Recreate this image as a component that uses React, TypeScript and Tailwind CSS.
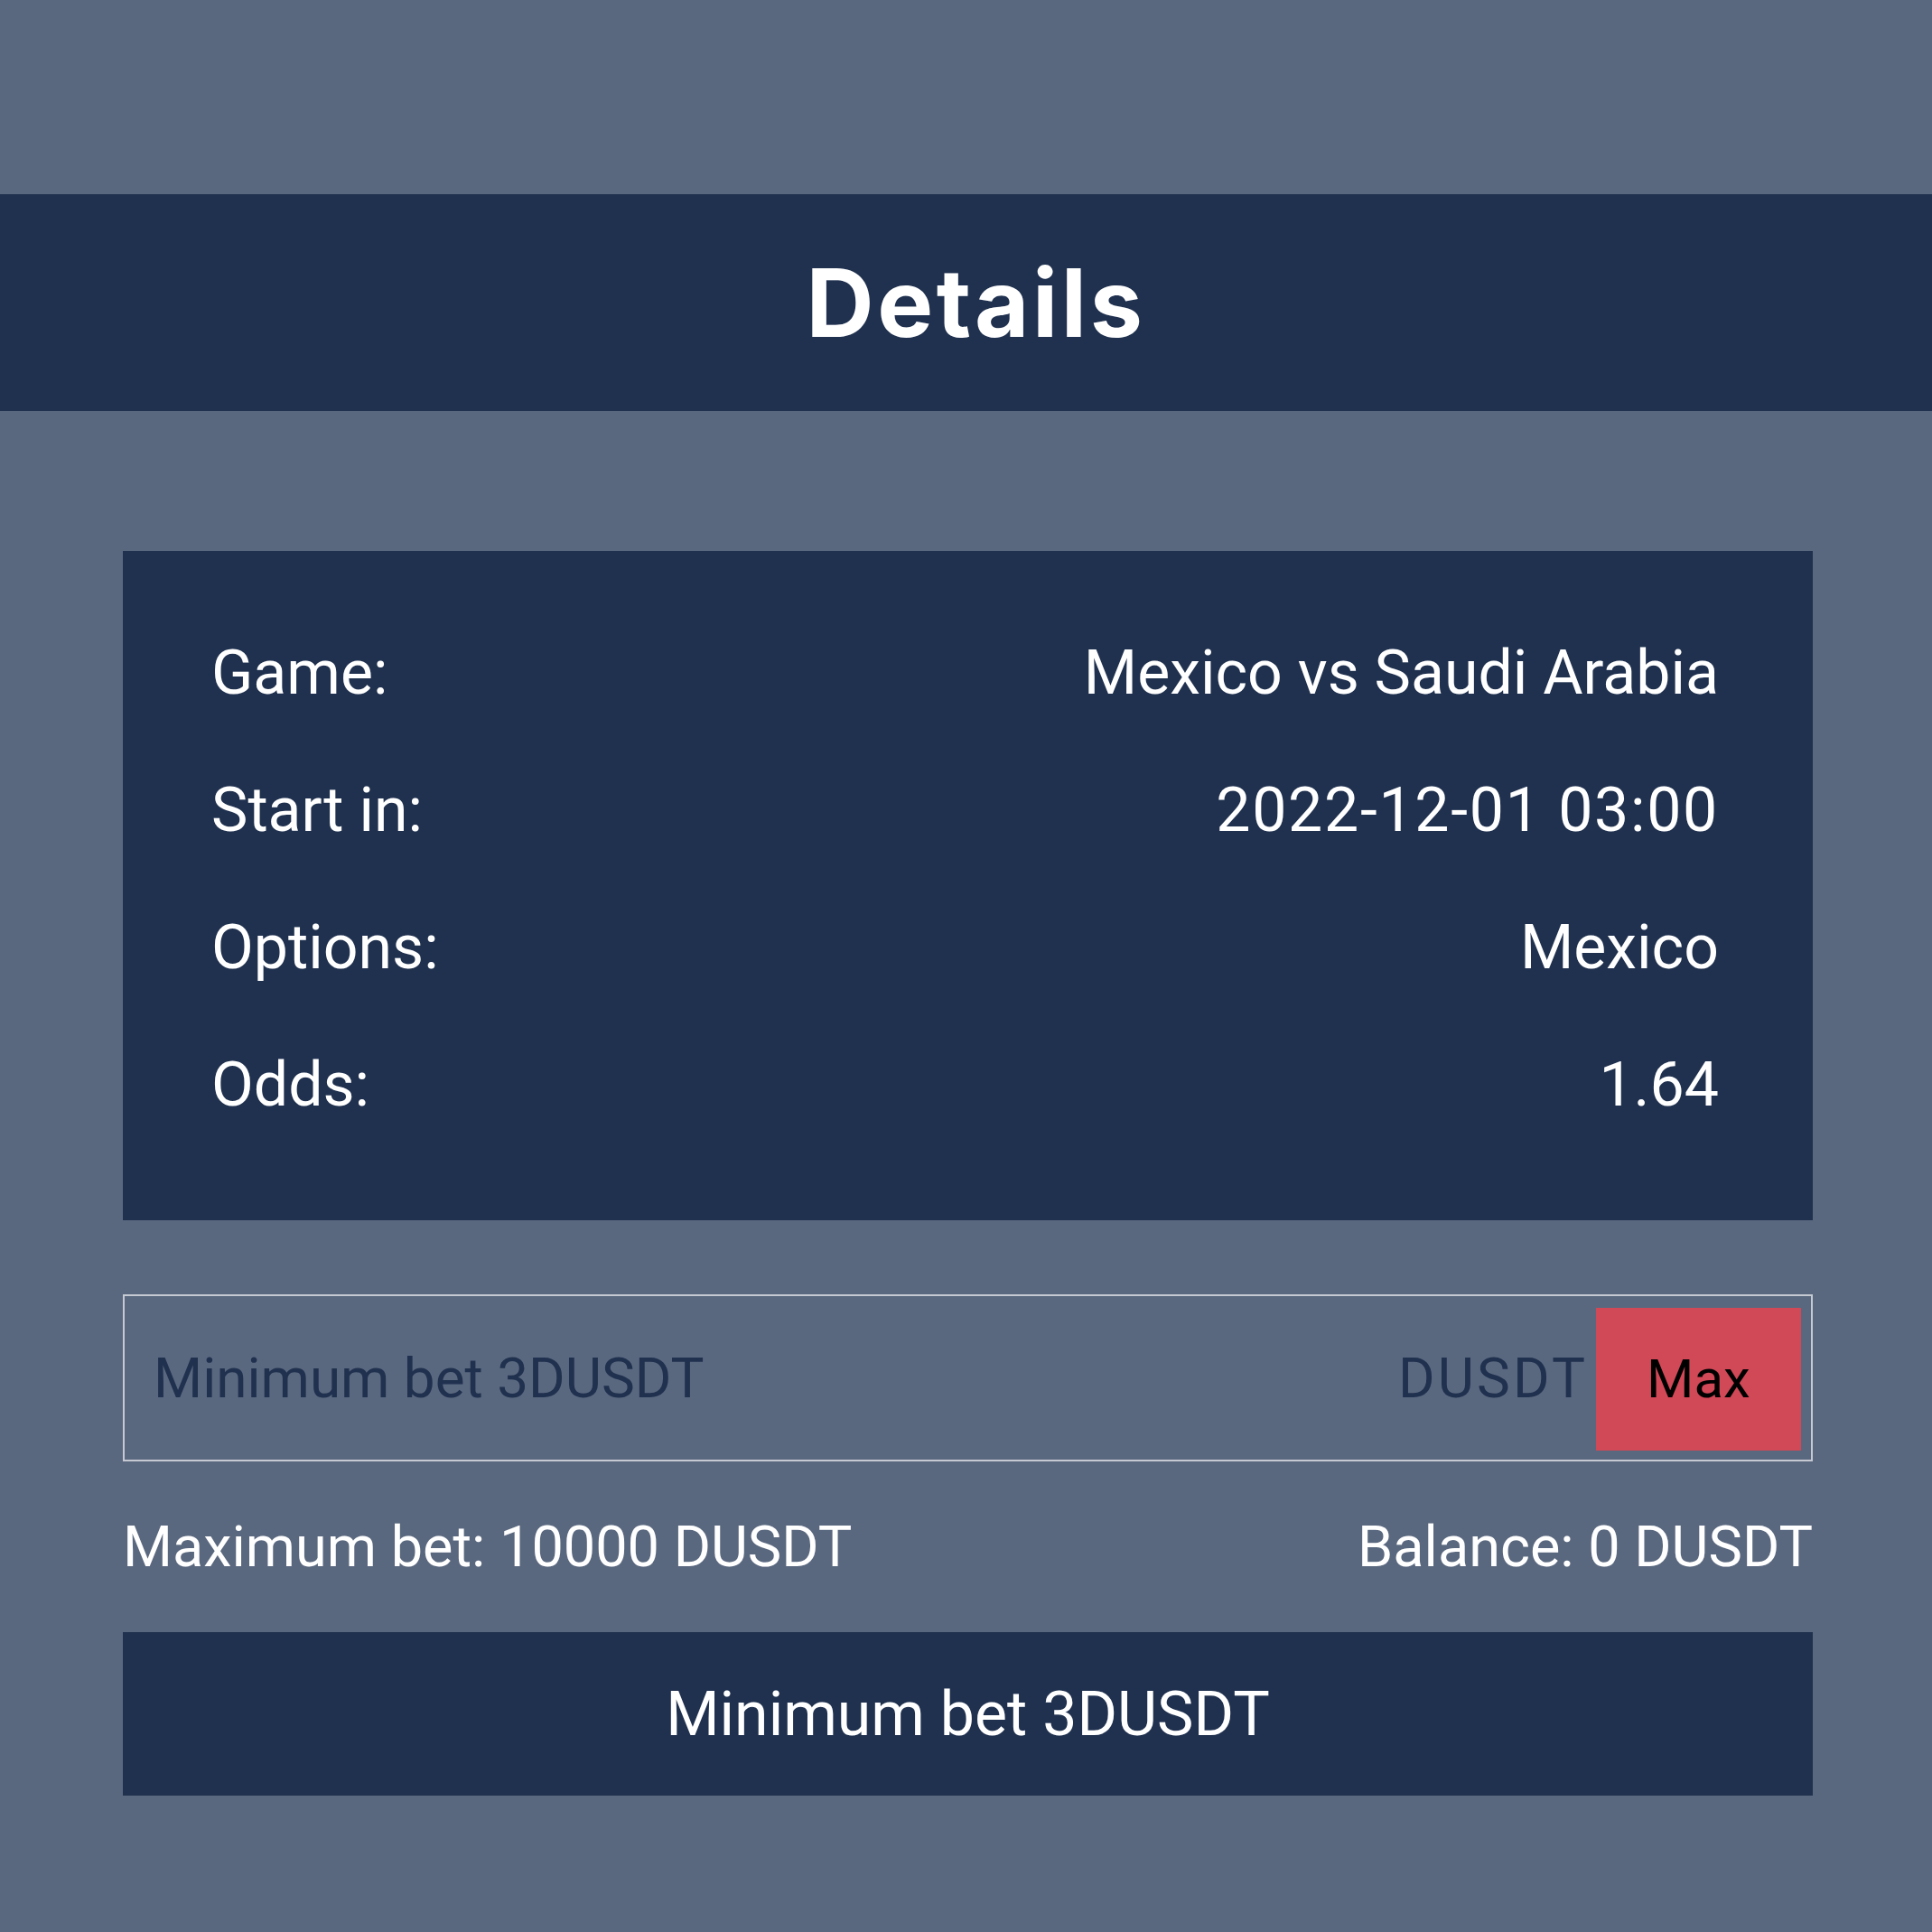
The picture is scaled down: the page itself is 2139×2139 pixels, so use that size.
import React from 'react';

const rows = [
  { label: 'Game:', value: 'Mexico vs Saudi Arabia' },
  { label: 'Start in:', value: '2022-12-01 03:00' },
  { label: 'Options:', value: 'Mexico' },
  { label: 'Odds:', value: '1.64' },
];

const App: React.FC = () => {
  return (
    <div
      className="min-h-[2139px] w-[2139px] bg-[#5a687f] pt-[215px] text-white"
      style={{ fontFamily: 'Roboto, "Noto Sans", sans-serif' }}
    >
      {/* header */}
      <div className="flex h-[240px] items-center justify-center bg-[#20314f]">
        <h1
          className="ml-[22px] text-[104px] font-bold leading-none tracking-[0.035em]"
          style={{ fontFamily: 'Inter, Roboto, sans-serif' }}
        >
          Details
        </h1>
      </div>

      <div className="ml-[136px] w-[1871px] pt-[155px]">
        {/* details card */}
        <div className="flex h-[741px] flex-col bg-[#20314f] pb-[74px] pl-[98px] pr-[104px] pt-[59px]">
          {rows.map((row) => (
            <div key={row.label} className="flex h-[152px] items-center justify-between text-[68px] leading-none">
              <span>{row.label}</span>
              <span className={row.label === 'Start in:' ? 'tracking-[0.025em]' : ''}>{row.value}</span>
            </div>
          ))}
        </div>

        {/* amount input */}
        <div className="mt-[82px] flex h-[185px] items-center border-2 border-[#c4c9d2]">
          <input
            type="text"
            placeholder="Minimum bet 3DUSDT"
            className="h-full min-w-0 flex-1 bg-transparent pl-[32px] text-[62px] text-[#20314f] outline-none placeholder:text-[#20314f]"
          />
          <span className="text-[62px] leading-none tracking-[0.05em] text-[#20314f]">DUSDT</span>
          <button className="ml-[9px] mr-[11px] mt-[3px] h-[158px] w-[227px] bg-[#d14857] text-[60px] leading-none text-black">
            Max
          </button>
        </div>

        {/* limits */}
        <div className="flex h-[189px] items-center justify-between text-[63px] leading-none">
          <span>Maximum bet: 10000 DUSDT</span>
          <span>Balance: 0 DUSDT</span>
        </div>

        {/* submit */}
        <button className="flex h-[181px] w-full items-center justify-center bg-[#20314f] text-[68px] leading-none text-white">
          Minimum bet 3DUSDT
        </button>
      </div>
    </div>
  );
};

export default App;
